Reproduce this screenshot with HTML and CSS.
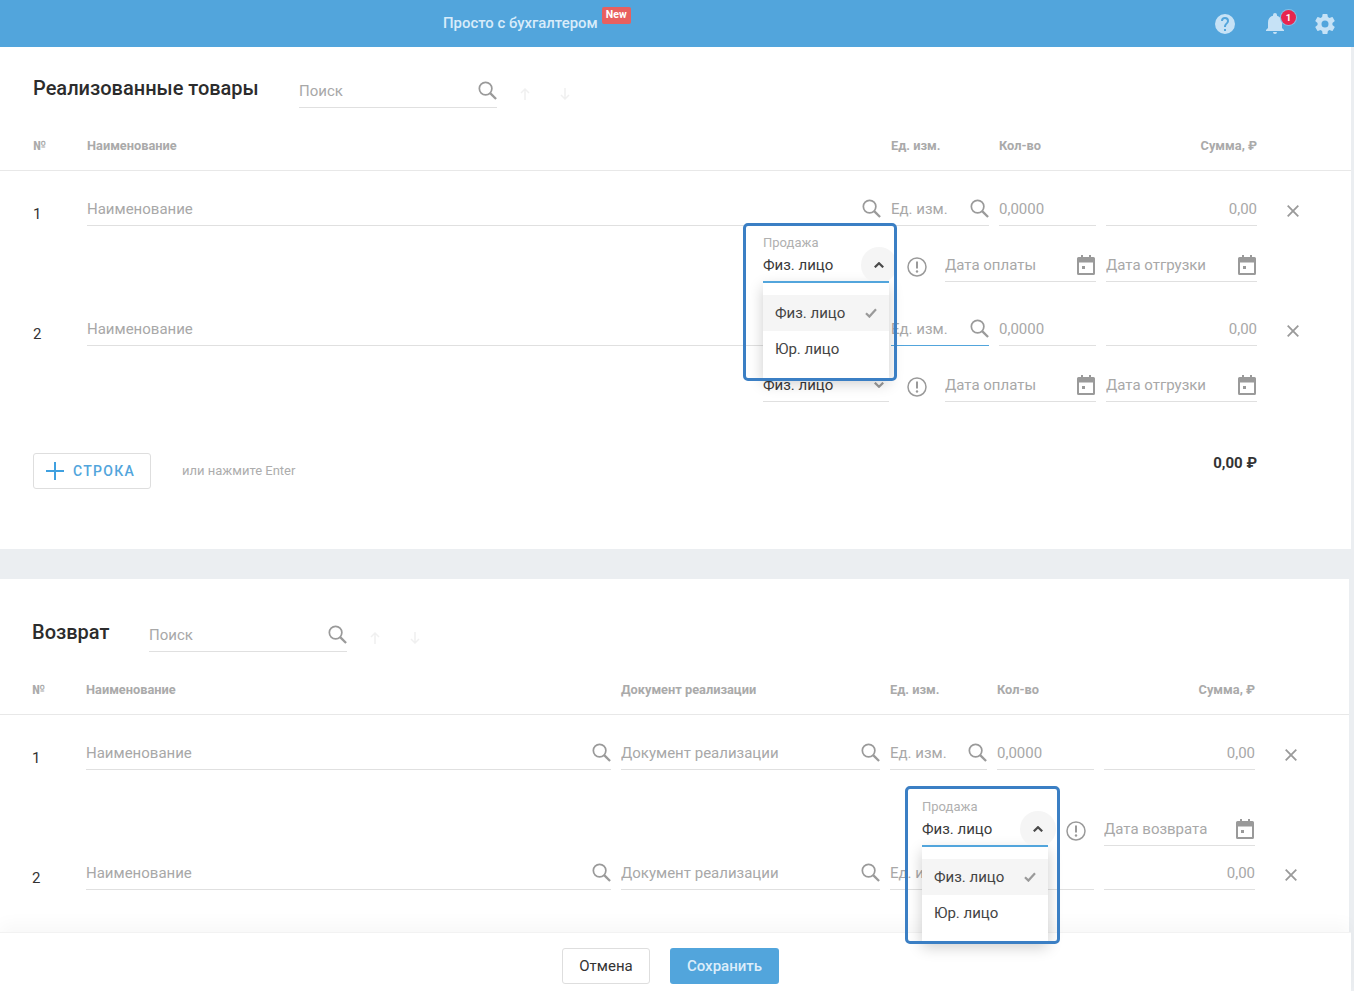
FILE: index.html
```html
<!DOCTYPE html>
<html lang="ru">
<head>
    <meta charset="UTF-8">
    <title>Реализация</title>
    <link rel="stylesheet" href="styles.css">
</head>
<body>
    <svg class="icon-defs" width="0" height="0">
        <symbol id="i-search" viewBox="0 0 20 20"><circle cx="8" cy="8" r="6.6" fill="none" stroke="currentColor" stroke-width="1.8"/><path d="M12.8 12.8 19 19" fill="none" stroke="currentColor" stroke-width="2.4"/></symbol>
        <symbol id="i-calendar" viewBox="0 0 18 20"><path fill="currentColor" d="M4 0h2v2h6V0h2v2h2.500A1.500 1.500 0 0 1 18 3.500v15a1.500 1.500 0 0 1-1.500 1.500h-15A1.500 1.500 0 0 1 0 18.500v-15A1.500 1.500 0 0 1 1.500 2H4zM2 7.500V18h14V7.500zM5 11h3v3H5z" fill-rule="evenodd"/></symbol>
        <symbol id="i-warn" viewBox="0 0 20 20"><circle cx="10" cy="10" r="9" fill="none" stroke="currentColor" stroke-width="1.5"/><path d="M10 4.500v7" stroke="currentColor" stroke-width="2"/><circle cx="10" cy="14.500" r="1.200" fill="currentColor"/></symbol>
        <symbol id="i-close" viewBox="0 0 12 12"><path d="M.7.700l10.600 10.600M11.300.700.700 11.300" fill="none" stroke="currentColor" stroke-width="1.800"/></symbol>
        <symbol id="i-chev-up" viewBox="0 0 10 6"><path d="M.8 5.300 5 1.200l4.200 4.100" fill="none" stroke="currentColor" stroke-width="2.200"/></symbol>
        <symbol id="i-chev-down" viewBox="0 0 10 6"><path d="M.8.700 5 4.800 9.200.7" fill="none" stroke="currentColor" stroke-width="2.200"/></symbol>
        <symbol id="i-check" viewBox="0 0 12 10"><path d="M1 5.200 4.400 8.600 11 1.300" fill="none" stroke="currentColor" stroke-width="2.200"/></symbol>
        <symbol id="i-arrow-up" viewBox="0 0 10 12"><path d="M5 12V1.500M1 5l4-4 4 4" fill="none" stroke="currentColor" stroke-width="1.500"/></symbol>
        <symbol id="i-arrow-down" viewBox="0 0 10 12"><path d="M5 0v10.500M1 7l4 4 4-4" fill="none" stroke="currentColor" stroke-width="1.500"/></symbol>
    </svg>

    <header class="topbar">
        <div class="topbar-title">Просто с бухгалтером<span class="new-badge">New</span></div>
        <div class="topbar-icons">
            <svg class="top-icon" viewBox="0 0 24 24"><path fill="currentColor" d="M12 2a10 10 0 1 0 0 20 10 10 0 0 0 0-20zm1 17h-2v-2h2zm2.070-7.750-.9.920C13.450 12.900 13 13.500 13 15h-2v-.5c0-1.100.45-2.100 1.170-2.830l1.240-1.260A2 2 0 1 0 10 9H8a4 4 0 1 1 8 0c0 .88-.36 1.680-.93 2.250z"/></svg>
            <div class="bell">
                <svg class="top-icon" viewBox="0 0 24 24"><path fill="currentColor" d="M12 22a2 2 0 0 0 2-2h-4a2 2 0 0 0 2 2zm7-6v-5.500c0-3.400-1.800-6.100-5-6.800V3a2 2 0 1 0-4 0v.7C6.800 4.400 5 7.100 5 10.500V16l-2 2v1h18v-1z"/></svg>
                <span class="bell-count">1</span>
            </div>
            <svg class="top-icon" viewBox="0 0 24 24"><path fill="currentColor" d="M19.430 12.980a7.800 7.800 0 0 0 0-1.960l2.110-1.650a.5.5 0 0 0 .12-.64l-2-3.460a.5.5 0 0 0-.61-.22l-2.490 1a7.300 7.300 0 0 0-1.690-.98l-.38-2.650A.49.49 0 0 0 14 2h-4a.49.490 0 0 0-.49.420l-.38 2.650c-.61.250-1.170.590-1.690.980l-2.490-1a.49.490 0 0 0-.61.220l-2 3.460a.49.490 0 0 0 .12.640l2.110 1.650a7.900 7.900 0 0 0 0 1.960l-2.110 1.650a.5.5 0 0 0-.12.640l2 3.460c.12.220.39.300.61.220l2.490-1c.52.400 1.080.73 1.690.98l.38 2.650c.03.240.24.420.49.420h4c.25 0 .46-.18.49-.42l.38-2.650c.61-.25 1.170-.59 1.690-.98l2.490 1c.23.090.49 0 .61-.22l2-3.460a.5.5 0 0 0-.12-.64zM12 15.500a3.500 3.500 0 1 1 0-7 3.500 3.500 0 0 1 0 7z"/></svg>
        </div>
    </header>

    <section class="panel panel-sales">
        <div class="panel-head">
            <h2 class="panel-title">Реализованные товары</h2>
            <div class="field search-field"><span class="ph">Поиск</span><svg class="ic-search"><use href="#i-search"/></svg></div>
            <svg class="ic-arrow"><use href="#i-arrow-up"/></svg>
            <svg class="ic-arrow"><use href="#i-arrow-down"/></svg>
        </div>
        <div class="table-head">
            <span>№</span><span>Наименование</span><span>Ед. изм.</span><span>Кол-во</span><span class="right">Сумма, ₽</span>
        </div>
        <div class="rows">
            <div class="row">
                <span class="num">1</span>
                <div class="field"><span class="ph">Наименование</span><svg class="ic-search"><use href="#i-search"/></svg></div>
                <div class="field"><span class="ph">Ед. изм.</span><svg class="ic-search"><use href="#i-search"/></svg></div>
                <div class="field"><span class="ph">0,0000</span></div>
                <div class="field"><span class="ph right">0,00</span></div>
                <svg class="ic-close"><use href="#i-close"/></svg>
            </div>
            <div class="subrow">
                <svg class="ic-warn"><use href="#i-warn"/></svg>
                <div class="field date-field"><span class="ph">Дата оплаты</span><svg class="ic-cal"><use href="#i-calendar"/></svg></div>
                <div class="field date-field"><span class="ph">Дата отгрузки</span><svg class="ic-cal"><use href="#i-calendar"/></svg></div>
            </div>
            <div class="row">
                <span class="num">2</span>
                <div class="field"><span class="ph">Наименование</span><svg class="ic-search"><use href="#i-search"/></svg></div>
                <div class="field active"><span class="ph">Ед. изм.</span><svg class="ic-search"><use href="#i-search"/></svg></div>
                <div class="field"><span class="ph">0,0000</span></div>
                <div class="field"><span class="ph right">0,00</span></div>
                <svg class="ic-close"><use href="#i-close"/></svg>
            </div>
            <div class="subrow">
                <div class="select-field"><span class="select-val">Физ. лицо</span><svg class="ic-chev"><use href="#i-chev-down"/></svg></div>
                <svg class="ic-warn"><use href="#i-warn"/></svg>
                <div class="field date-field"><span class="ph">Дата оплаты</span><svg class="ic-cal"><use href="#i-calendar"/></svg></div>
                <div class="field date-field"><span class="ph">Дата отгрузки</span><svg class="ic-cal"><use href="#i-calendar"/></svg></div>
            </div>
        </div>
        <div class="table-foot">
            <button class="add-btn"><svg class="ic-plus" viewBox="0 0 18 18"><path d="M9 0v18M0 9h18" stroke="currentColor" stroke-width="2"/></svg>СТРОКА</button>
            <span class="hint">или нажмите Enter</span>
            <span class="total">0,00 ₽</span>
        </div>

        <div class="note-box note-sales">
            <div class="note-label">Продажа</div>
            <div class="select-field open"><span class="select-val">Физ. лицо</span><span class="chev-round"><svg class="ic-chev"><use href="#i-chev-up"/></svg></span></div>
            <ul class="menu">
                <li class="selected">Физ. лицо<svg class="ic-check"><use href="#i-check"/></svg></li>
                <li>Юр. лицо</li>
            </ul>
        </div>
    </section>

    <section class="panel panel-return">
        <div class="panel-head">
            <h2 class="panel-title">Возврат</h2>
            <div class="field search-field"><span class="ph">Поиск</span><svg class="ic-search"><use href="#i-search"/></svg></div>
            <svg class="ic-arrow"><use href="#i-arrow-up"/></svg>
            <svg class="ic-arrow"><use href="#i-arrow-down"/></svg>
        </div>
        <div class="table-head">
            <span>№</span><span>Наименование</span><span>Документ реализации</span><span>Ед. изм.</span><span>Кол-во</span><span class="right">Сумма, ₽</span>
        </div>
        <div class="rows">
            <div class="row">
                <span class="num">1</span>
                <div class="field"><span class="ph">Наименование</span><svg class="ic-search"><use href="#i-search"/></svg></div>
                <div class="field"><span class="ph">Документ реализации</span><svg class="ic-search"><use href="#i-search"/></svg></div>
                <div class="field"><span class="ph">Ед. изм.</span><svg class="ic-search"><use href="#i-search"/></svg></div>
                <div class="field"><span class="ph">0,0000</span></div>
                <div class="field"><span class="ph right">0,00</span></div>
                <svg class="ic-close"><use href="#i-close"/></svg>
            </div>
            <div class="subrow">
                <svg class="ic-warn"><use href="#i-warn"/></svg>
                <div class="field date-field"><span class="ph">Дата возврата</span><svg class="ic-cal"><use href="#i-calendar"/></svg></div>
            </div>
            <div class="row">
                <span class="num">2</span>
                <div class="field"><span class="ph">Наименование</span><svg class="ic-search"><use href="#i-search"/></svg></div>
                <div class="field"><span class="ph">Документ реализации</span><svg class="ic-search"><use href="#i-search"/></svg></div>
                <div class="field"><span class="ph clipped">Ед. изм.</span></div>
                <div class="field"></div>
                <div class="field"><span class="ph right">0,00</span></div>
                <svg class="ic-close"><use href="#i-close"/></svg>
            </div>
        </div>

        <div class="note-box note-return">
            <div class="note-label">Продажа</div>
            <div class="select-field open"><span class="select-val">Физ. лицо</span><span class="chev-round"><svg class="ic-chev"><use href="#i-chev-up"/></svg></span></div>
            <ul class="menu">
                <li class="selected">Физ. лицо<svg class="ic-check"><use href="#i-check"/></svg></li>
                <li>Юр. лицо</li>
            </ul>
        </div>
    </section>

    <footer class="bottombar">
        <button class="btn-cancel">Отмена</button>
        <button class="btn-save">Сохранить</button>
    </footer>
</body>
</html>
```
FILE: styles.css
```css
:root {
    --blue: #52a5dc;
    --line: #e0e0e0;
    --ph: #a8a8a8;
    --icon: #9a9a9a;
    --text: #333333;
}
html, body {
    margin: 0;
    padding: 0;
    height: 991px;
    overflow: hidden;
    font-family: Roboto, 'Liberation Sans', sans-serif;
    background-color: #ebeef1;
    color: var(--text);
}
.icon-defs {
    position: absolute;
}
.topbar {
    height: 47px;
    background-color: var(--blue);
    display: flex;
    align-items: center;
    padding-left: 443px;
    padding-right: 17px;
    justify-content: space-between;
}
.topbar-title {
    font-size: 14.9px;
    font-weight: 500;
    color: #d8ecfa;
    display: flex;
    align-items: center;
    padding-bottom: 1px;
}
.new-badge {
    background-color: #e8605f;
    color: #fff;
    font-size: 10.5px;
    font-weight: 700;
    border-radius: 2px;
    width: 29px;
    height: 17px;
    line-height: 15px;
    text-align: center;
    margin: -15px 0 0 4px;
}
.topbar-icons {
    display: flex;
    align-items: center;
    gap: 26px;
}
.top-icon {
    width: 24px;
    height: 24px;
    color: #c6e2f6;
    display: block;
}
.bell {
    position: relative;
}
.bell-count {
    position: absolute;
    top: -2px;
    left: 18px;
    width: 15px;
    height: 15px;
    line-height: 15px;
    border-radius: 50%;
    background-color: #e8254f;
    box-shadow: 0 0 0 1px #85bfe6;
    color: #fff;
    font-size: 9.5px;
    font-weight: 700;
    text-align: center;
}
.panel {
    position: relative;
    background-color: #fff;
}
.panel-sales {
    width: 1351px;
    height: 502px;
    margin-bottom: 30px;
    --left: 33px;
}
.panel-return {
    width: 1349px;
    height: 412px;
    --left: 32px;
}
.panel-head {
    display: flex;
    align-items: flex-end;
    padding-left: var(--left);
    height: 61px;
}
.panel-return .panel-head {
    height: 73px;
}
.panel-title {
    margin: 0 0 8px;
    font-size: 20px;
    line-height: 24px;
    font-weight: 500;
    color: #2c2c2c;
}
.panel-sales .panel-title {
    width: 266px;
}
.panel-return .panel-title {
    width: 117px;
}
.field {
    height: 32px;
    border-bottom: 1px solid var(--line);
    display: flex;
    align-items: center;
    justify-content: space-between;
    box-sizing: content-box;
    min-width: 0;
    font-size: 15px;
}
.field.active {
    border-bottom-color: #52a5dc;
}
.search-field {
    width: 198px;
    flex: none;
}
.ph {
    color: var(--ph);
    white-space: nowrap;
    overflow: hidden;
}
.ph.right {
    margin-left: auto;
}
.ph.clipped {
    width: 32px;
}
.ic-search {
    width: 19px;
    height: 19px;
    color: var(--icon);
    flex: none;
    margin-top: -2px;
}
.ic-arrow {
    width: 10px;
    height: 12px;
    color: #f0f0f0;
    margin: 0 0 8px 23px;
    flex: none;
}
.ic-arrow + .ic-arrow {
    margin-left: 30px;
}
.table-head {
    display: grid;
    align-items: center;
    height: 50px;
    padding-top: 12px;
    border-bottom: 1px solid #e8e8e8;
    padding-left: var(--left);
    padding-right: 94px;
    column-gap: 10px;
    font-size: 12.8px;
    font-weight: 700;
    color: #aaaaaa;
}
.table-head .right {
    text-align: right;
}
.panel-sales .table-head, .panel-sales .row {
    grid-template-columns: 44px 1fr 98px 97px 151px;
}
.panel-return .table-head, .panel-return .row {
    grid-template-columns: 44px 1fr 259px 97px 97px 151px;
}
.rows {
    padding: 22px 94px 0 var(--left);
}
.row {
    display: grid;
    column-gap: 10px;
    align-items: end;
    position: relative;
    margin-bottom: 23px;
}
.row:nth-child(3) {
    margin-top: 31px;
}
.panel-return .subrow {
    margin-top: 43px;
}
.panel-return .row:first-child {
    margin-bottom: 0;
}
.panel-return .row:nth-child(3) {
    margin-top: 11px;
}
.num {
    font-size: 15px;
    line-height: 20px;
    margin-bottom: 2px;
}
.ic-close {
    position: absolute;
    right: -42px;
    top: 12px;
    width: 12px;
    height: 12px;
    color: var(--icon);
}
.subrow {
    display: flex;
    justify-content: flex-end;
    align-items: flex-end;
    height: 33px;
}
.select-field {
    width: 121px;
    height: 32px;
    flex: none;
    display: flex;
    align-items: center;
    justify-content: space-between;
    border-bottom: 1px solid var(--line);
    font-size: 15px;
    padding-right: 5px;
    box-sizing: content-box;
}
.select-val {
    color: #3a3a3a;
}
.ic-chev {
    width: 10px;
    height: 6px;
    color: var(--icon);
}
.ic-warn {
    width: 20px;
    height: 20px;
    color: var(--icon);
    flex: none;
    margin: 0 18px 5px 18px;
}
.date-field {
    width: 151px;
    flex: none;
}
.date-field + .date-field {
    margin-left: 10px;
}
.ic-cal {
    width: 18px;
    height: 20px;
    color: var(--icon);
    flex: none;
    margin-right: 1px;
}
.table-foot {
    display: flex;
    align-items: flex-start;
    padding: 51px 94px 0 var(--left);
}
.add-btn {
    width: 118px;
    height: 36px;
    box-sizing: border-box;
    background-color: #fff;
    border: 1px solid #dedede;
    border-radius: 3px;
    padding: 0 0 1px 12px;
    display: flex;
    align-items: center;
    gap: 9px;
    font-family: inherit;
    font-size: 14px;
    font-weight: 500;
    letter-spacing: 1.3px;
    color: var(--blue);
}
.ic-plus {
    width: 18px;
    height: 18px;
    flex: none;
    color: #3fa0e0;
}
.hint {
    margin-left: 31px;
    font-size: 13px;
    line-height: 36px;
    color: #adadad;
}
.total {
    margin-left: auto;
    font-size: 15px;
    font-weight: 700;
    line-height: 20px;
    color: #333;
}
/* blue frames drawn over the screenshot, with the open select inside */
.note-box {
    position: absolute;
    box-sizing: border-box;
    width: 154px;
    height: 158px;
    border: 3px solid transparent;
    padding: 9px 5px 0 17px;
    z-index: 5;
}
.note-box::after {
    content: "";
    position: absolute;
    inset: -3px;
    border: 3px solid #3b7fc4;
    border-radius: 5px;
    pointer-events: none;
}
.note-sales {
    left: 743px;
    top: 176px;
}
.note-return {
    left: 905px;
    top: 207px;
    width: 155px;
    padding: 10px 6px 0 14px;
}
.note-label {
    font-size: 13px;
    line-height: 16px;
    color: #b0b0b0;
}
.select-field.open {
    width: 126px;
    height: 30px;
    padding: 0;
    margin-bottom: 2px;
    border-bottom: none;
    position: relative;
}
/* underline sits on top of the round chevron background */
.select-field.open::after {
    content: "";
    position: absolute;
    left: 0;
    right: 0;
    bottom: -2px;
    height: 2px;
    background-color: var(--blue);
}
.select-field.open .select-val {
    padding-bottom: 2px;
}
.chev-round {
    position: absolute;
    right: -8px;
    top: -4px;
    width: 36px;
    height: 36px;
    border-radius: 50%;
    background-color: #f5f5f5;
    display: flex;
    align-items: center;
    justify-content: center;
}
.chev-round .ic-chev {
    color: #4a4a4a;
}
.menu {
    list-style: none;
    margin: 0;
    padding: 12px 0;
    width: 126px;
    background-color: #fff;
    box-shadow: 0 4px 14px rgba(0, 0, 0, 0.2);
    font-size: 15px;
    color: #444;
}
.menu li {
    height: 36px;
    padding: 0 12px;
    display: flex;
    align-items: center;
    justify-content: space-between;
}
.menu li.selected {
    background-color: #f5f5f5;
}
.ic-check {
    width: 12px;
    height: 10px;
    color: var(--icon);
}
.bottombar {
    position: absolute;
    left: 0;
    right: 3px;
    top: 932px;
    height: 59px;
    background-color: #fff;
    border-top: 1px solid #f2f2f2;
    box-shadow: 0 -8px 16px rgba(0, 0, 0, 0.03);
    box-sizing: border-box;
    display: flex;
    justify-content: center;
    gap: 20px;
    padding: 15px 10px 0 0;
    z-index: 3;
}
.bottombar button {
    height: 36px;
    border-radius: 3px;
    font-family: inherit;
    font-size: 15px;
    box-sizing: border-box;
}
.btn-cancel {
    width: 88px;
    background-color: #fff;
    border: 1px solid #dedede;
    color: #333;
}
.btn-save {
    width: 109px;
    background-color: var(--blue);
    border: none;
    color: #dcedfa;
    font-weight: 500;
}
```
